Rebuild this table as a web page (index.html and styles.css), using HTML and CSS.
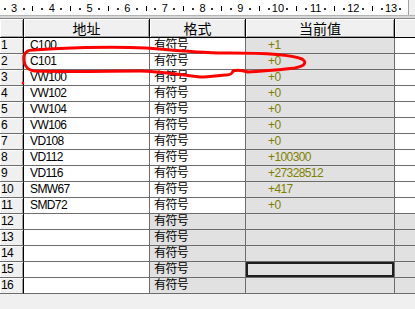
FILE: index.html
```html
<!DOCTYPE html>
<html lang="zh-CN">
<head>
<meta charset="utf-8">
<title>状态表</title>
<link rel="stylesheet" href="styles.css">
</head>
<body>
<div class="page">
  <div class="ruler">
    <span class="rc"><i class="dot"></i></span><span class="rc">3</span><span class="rc"><i class="dot"></i></span><span class="rc"><i class="tick"></i></span>
    <span class="rc"><i class="dot"></i></span><span class="rc">4</span><span class="rc"><i class="dot"></i></span><span class="rc"><i class="tick"></i></span>
    <span class="rc"><i class="dot"></i></span><span class="rc">5</span><span class="rc"><i class="dot"></i></span><span class="rc"><i class="tick"></i></span>
    <span class="rc"><i class="dot"></i></span><span class="rc">6</span><span class="rc"><i class="dot"></i></span><span class="rc"><i class="tick"></i></span>
    <span class="rc"><i class="dot"></i></span><span class="rc">7</span><span class="rc"><i class="dot"></i></span><span class="rc"><i class="tick"></i></span>
    <span class="rc"><i class="dot"></i></span><span class="rc">8</span><span class="rc"><i class="dot"></i></span><span class="rc"><i class="tick"></i></span>
    <span class="rc"><i class="dot"></i></span><span class="rc">9</span><span class="rc"><i class="dot"></i></span><span class="rc"><i class="tick"></i></span>
    <span class="rc"><i class="dot"></i></span><span class="rc">10</span><span class="rc"><i class="dot"></i></span><span class="rc"><i class="tick"></i></span>
    <span class="rc"><i class="dot"></i></span><span class="rc">11</span><span class="rc"><i class="dot"></i></span><span class="rc"><i class="tick"></i></span>
    <span class="rc"><i class="dot"></i></span><span class="rc">12</span><span class="rc"><i class="dot"></i></span><span class="rc"><i class="tick"></i></span>
    <span class="rc"><i class="dot"></i></span><span class="rc">13</span><span class="rc"><i class="dot"></i></span><span class="rc"><i class="tick"></i></span>
  </div>
  <div class="band"></div>

  <div class="grid head">
    <div class="hc"></div>
    <div class="hc">地址</div>
    <div class="hc">格式</div>
    <div class="hc">当前值</div>
    <div class="hc last"></div>
  </div>

  <div class="grid body">
    <div class="rn">1</div><div class="c addr">C100</div><div class="c fmt">有符号</div><div class="c val">+1</div><div class="c ex"></div>
    <div class="rn">2</div><div class="c addr">C101</div><div class="c fmt">有符号</div><div class="c val">+0</div><div class="c ex"></div>
    <div class="rn">3</div><div class="c addr">VW100</div><div class="c fmt">有符号</div><div class="c val">+0</div><div class="c ex"></div>
    <div class="rn">4</div><div class="c addr">VW102</div><div class="c fmt">有符号</div><div class="c val">+0</div><div class="c ex"></div>
    <div class="rn">5</div><div class="c addr">VW104</div><div class="c fmt">有符号</div><div class="c val">+0</div><div class="c ex"></div>
    <div class="rn">6</div><div class="c addr">VW106</div><div class="c fmt">有符号</div><div class="c val">+0</div><div class="c ex"></div>
    <div class="rn">7</div><div class="c addr">VD108</div><div class="c fmt">有符号</div><div class="c val">+0</div><div class="c ex"></div>
    <div class="rn">8</div><div class="c addr">VD112</div><div class="c fmt">有符号</div><div class="c val">+100300</div><div class="c ex"></div>
    <div class="rn">9</div><div class="c addr">VD116</div><div class="c fmt">有符号</div><div class="c val">+27328512</div><div class="c ex"></div>
    <div class="rn">10</div><div class="c addr">SMW67</div><div class="c fmt">有符号</div><div class="c val">+417</div><div class="c ex"></div>
    <div class="rn">11</div><div class="c addr">SMD72</div><div class="c fmt">有符号</div><div class="c val">+0</div><div class="c ex"></div>
    <div class="rn">12</div><div class="c addr"></div><div class="c fmt off">有符号</div><div class="c val"></div><div class="c ex off"></div>
    <div class="rn">13</div><div class="c addr"></div><div class="c fmt off">有符号</div><div class="c val"></div><div class="c ex off"></div>
    <div class="rn">14</div><div class="c addr"></div><div class="c fmt off">有符号</div><div class="c val"></div><div class="c ex off"></div>
    <div class="rn">15</div><div class="c addr"></div><div class="c fmt off">有符号</div><div class="c val sel"></div><div class="c ex off"></div>
    <div class="rn">16</div><div class="c addr"></div><div class="c fmt off">有符号</div><div class="c val"></div><div class="c ex off"></div>
  </div>

  <svg class="mark" width="415" height="309" viewBox="0 0 415 309" aria-hidden="true">
    <path d="M24 58 C24 52 27 50 34 50 C60 48 110 46 145 48 C175 50 200 53 230 53 C260 53 290 54 302 59 C308 63 304 66 295 68 C280 70 262 71 248 72 Q238 69 233 71 Q232 75 226 75 C215 76 208 77 200 77 C180 75 160 71 140 71 C110 71 70 72 35 71 C27 70 24 66 24 58 Z"/>
    <circle cx="23" cy="83" r="1.3"/>
  </svg>
</div>
</body>
</html>
```

FILE: styles.css
```css
html, body {
  margin: 0;
  padding: 0;
}

body {
  background: #f0f0f0;
  font-family: "Liberation Sans", "Noto Sans CJK SC", sans-serif;
  font-size: 12px;
  color: #000;
}

.page {
  position: relative;
  width: 415px;
  height: 309px;
  overflow: hidden;
  background: #f0f0f0;
}

.ruler {
  display: flex;
  width: 409px;
  height: 15px;
  padding-top: 2px;
  box-sizing: border-box;
  background: #fff;
  border-right: 1px solid #a0a0a0;
  overflow: hidden;
  font-size: 11px;
  line-height: 13px;
}

.rc {
  flex: none;
  width: 9.43px;
  display: flex;
  justify-content: center;
  align-items: center;
  white-space: nowrap;
}

.dot {
  display: block;
  width: 2px;
  height: 2px;
  background: #333;
  margin-top: 1px;
}

.tick {
  display: block;
  width: 1px;
  height: 5px;
  background: #000;
}

.band {
  height: 4px;
  box-sizing: border-box;
  background: #d8d8d8;
  border-top: 1px solid #b4b4b4;
  border-bottom: 1px solid #8a8a8a;
}

.grid {
  display: grid;
  grid-template-columns: 24px 126px 96px 149px 1fr;
}

.head {
  grid-auto-rows: 19px;
}

.hc {
  box-sizing: border-box;
  background: #f0f0f0;
  border-right: 1px solid #000;
  border-bottom: 1px solid #000;
  box-shadow: inset 1px 1px 0 #fff, inset -1px -1px 0 #a0a0a0;
  text-align: center;
  font-size: 14px;
  line-height: 18px;
  padding-top: 1px;
}

.hc.last {
  border-right: 0;
  box-shadow: inset 1px 1px 0 #fff;
}

.body {
  grid-auto-rows: 16px;
}

.rn,
.c {
  box-sizing: border-box;
  border-bottom: 1px solid #6d6d6d;
  line-height: 14px;
  white-space: nowrap;
  overflow: hidden;
  letter-spacing: -0.6px;
}

.rn {
  background: #f0f0f0;
  border-right: 1px solid #000;
  box-shadow: inset 1px 1px 0 #fff, inset -1px 0 0 #a0a0a0;
  padding-left: 1px;
}

.c {
  border-right: 1px solid #6d6d6d;
  background: #fff;
}

.addr {
  padding-left: 6px;
}

.fmt {
  padding-left: 4px;
}

.val {
  background: #e1e1e1;
  color: #808000;
  padding-left: 22px;
}

.ex {
  border-right: 0;
}

.off {
  background: #e1e1e1;
}

.sel {
  box-shadow: inset 0 0 0 2px #1e1e1e;
}

.mark {
  position: absolute;
  left: 0;
  top: 0;
  pointer-events: none;
}

.mark path {
  fill: none;
  stroke: #ff0000;
  stroke-width: 3;
  stroke-linecap: round;
  stroke-linejoin: round;
}

.mark circle {
  fill: #ff0000;
}
```
